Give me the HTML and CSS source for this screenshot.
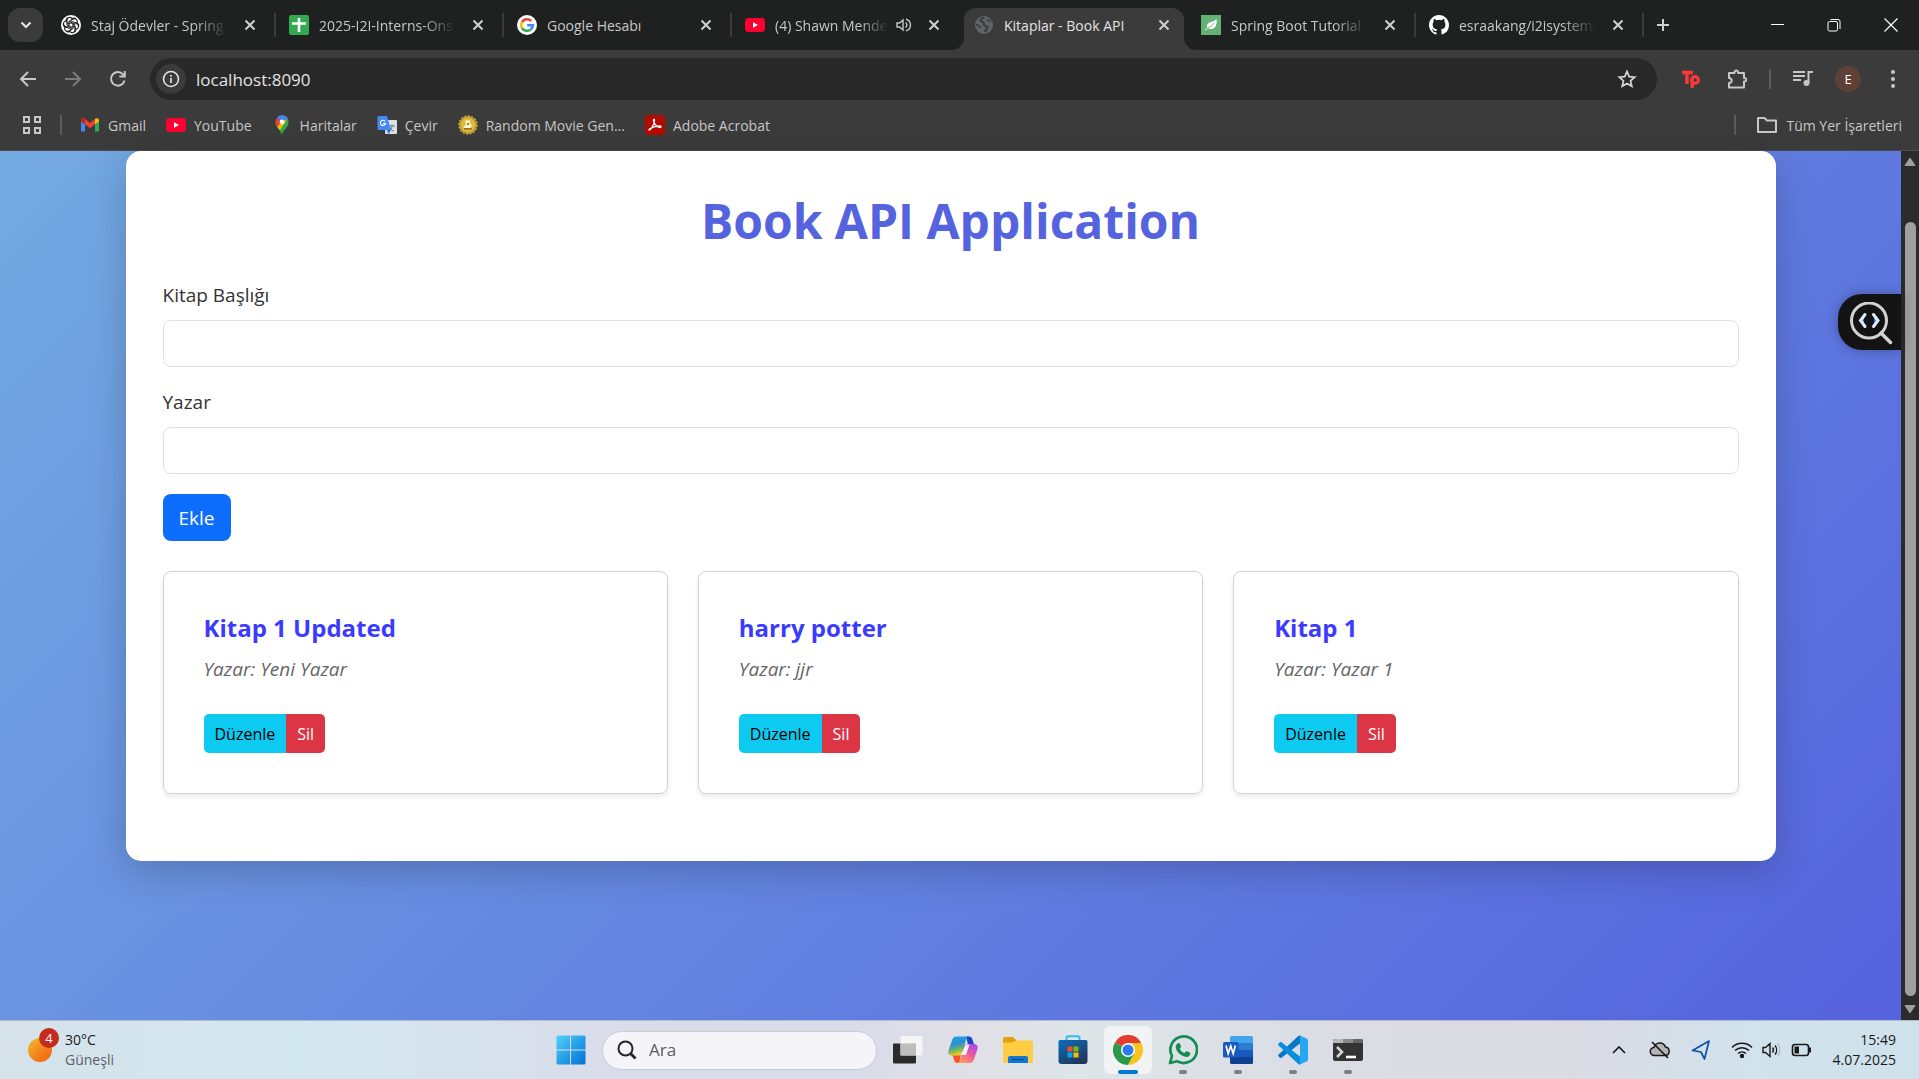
FILE: index.html
```html
<!DOCTYPE html>
<html lang="tr">
<head>
<meta charset="utf-8">
<meta name="viewport" content="width=device-width, initial-scale=1">
<title>Kitaplar - Book API</title>
<link rel="stylesheet" href="styles.css">
</head>
<body>
<svg class="defs" aria-hidden="true">
  <symbol id="i-x" viewBox="0 0 20 20"><path d="M5.500 5.500l9 9M14.500 5.500l-9 9" stroke="currentColor" stroke-width="2" fill="none"/></symbol>
  <symbol id="i-yt" viewBox="0 0 20 20"><rect y="3" width="20" height="14" rx="3.500" fill="#ff0033"/><path d="M8 7.200v5.600l5-2.800z" fill="#fff"/></symbol>
</svg>

<header class="browser">
  <nav class="tabstrip" aria-label="Sekmeler">
    <button class="tab-search" aria-label="Sekmelerde ara"><svg width="14" height="14" viewBox="0 0 14 14"><path d="M2.500 4.500L7 9l4.500-4.500" stroke="#e3e3e3" stroke-width="2.200" fill="none"/></svg></button>
    <div class="tabs">
      <div class="tab">
        <svg class="icon" viewBox="0 0 20 20"><circle cx="10" cy="10" r="10" fill="#fff"/><g fill="none" stroke="#222" stroke-width="1.100"><path id="petal" d="M10 7.700V5.900a2.900 2.900 0 0 1 5.100-1.800M8 11.200V6.600l4.200-2.500a2.900 2.900 0 0 1 3.900 3.900"/><use href="#petal" transform="rotate(60 10 10)"/><use href="#petal" transform="rotate(120 10 10)"/><use href="#petal" transform="rotate(180 10 10)"/><use href="#petal" transform="rotate(240 10 10)"/><use href="#petal" transform="rotate(300 10 10)"/></g></svg>
        <button class="tab-title fade">Staj Ödevler - Spring</button>
        <button class="close" aria-label="Kapat"><svg class="icon"><use href="#i-x"/></svg></button>
      </div>
      <div class="tab">
        <svg class="icon" viewBox="0 0 20 20"><rect width="20" height="20" rx="2" fill="#34a853"/><path d="M10 3v14M3 8.500h14" stroke="#fff" stroke-width="2.600"/></svg>
        <button class="tab-title fade">2025-I2I-Interns-Ons</button>
        <button class="close" aria-label="Kapat"><svg class="icon"><use href="#i-x"/></svg></button>
      </div>
      <div class="tab">
        <svg class="icon" viewBox="0 0 20 20"><circle cx="10" cy="10" r="10" fill="#fff"/><g fill="none" stroke-width="2.600"><path d="M14.200 6A5.800 5.800 0 0 0 5 7.200" stroke="#ea4335"/><path d="M5 7.200a5.800 5.800 0 0 0 0 5.600" stroke="#fbbc05"/><path d="M5 12.800a5.800 5.800 0 0 0 8.700 1.700" stroke="#34a853"/><path d="M13.700 14.500A5.800 5.800 0 0 0 15.800 10.200H10.200" stroke="#4285f4"/></g></svg>
        <button class="tab-title">Google Hesabı</button>
        <button class="close" aria-label="Kapat"><svg class="icon"><use href="#i-x"/></svg></button>
      </div>
      <div class="tab plain">
        <svg class="icon"><use href="#i-yt"/></svg>
        <button class="tab-title tight fade">(4) Shawn Mende</button>
        <button class="mute" aria-label="Sekmenin sesini kapat"><svg width="16" height="16" viewBox="0 0 16 16" fill="none" stroke="#c7c7c7" stroke-width="1.400"><path d="M1 6v4h2.500l3.500 3V3L3.500 6zM9.500 5.500a3 3 0 0 1 0 5M10 2.200a6 6 0 0 1 0 11.600"/></svg></button>
        <button class="close" aria-label="Kapat"><svg class="icon"><use href="#i-x"/></svg></button>
      </div>
      <div class="tab active">
        <svg class="icon" viewBox="0 0 20 20"><circle cx="10" cy="10" r="9" fill="#5f6368"/><path d="M10 2.500c-1.500 1-3.500 1.200-3.500 3 0 1.500 1.800 1 3 2s-.5 2.200 1 3 3 .3 3 2-2 2-2.500 4.500" fill="none" stroke="#3b3b3b" stroke-width="2.200"/><path d="M2 9.500c2 .5 4 1.500 4.500 3.500M13 4.500c1 1.500 3 1.500 4 2" fill="none" stroke="#3b3b3b" stroke-width="1.500"/></svg>
        <button class="tab-title">Kitaplar - Book API</button>
        <button class="close" aria-label="Kapat"><svg class="icon"><use href="#i-x"/></svg></button>
      </div>
      <div class="tab">
        <svg class="icon" viewBox="0 0 20 20"><rect width="20" height="20" fill="#63b175"/><path d="M15.500 4c.8 5.500-1 10-5.500 10-1.500 0-2.500-.4-3.200-1L5 15.500l-.8-.6 2-2.500C4.500 6.500 12 8 15.500 4z" fill="#fff"/><path d="M6 13.200c3-.8 5.500-2.400 7-5.200" stroke="#63b175" stroke-width=".9" fill="none"/></svg>
        <button class="tab-title fade">Spring Boot Tutorial</button>
        <button class="close" aria-label="Kapat"><svg class="icon"><use href="#i-x"/></svg></button>
      </div>
      <div class="tab">
        <svg class="icon" viewBox="0 0 16 16"><path fill="#fff" d="M8 0C3.580 0 0 3.580 0 8c0 3.540 2.290 6.530 5.470 7.590.4.070.55-.17.55-.38 0-.19-.01-.82-.01-1.490-2.010.37-2.530-.49-2.690-.94-.09-.23-.48-.94-.82-1.130-.28-.15-.68-.52-.01-.53.63-.01 1.080.58 1.230.82.72 1.210 1.870.87 2.330.66.070-.52.28-.87.51-1.070-1.780-.2-3.640-.89-3.640-3.950 0-.87.31-1.590.82-2.150-.08-.2-.36-1.020.08-2.120 0 0 .67-.21 2.200.82a7.600 7.600 0 0 1 4 0c1.530-1.040 2.200-.82 2.200-.82.44 1.100.16 1.920.08 2.120.51.56.82 1.270.82 2.150 0 3.070-1.870 3.750-3.650 3.950.29.25.54.73.54 1.480 0 1.070-.01 1.930-.01 2.200 0 .21.15.46.55.38A8 8 0 0 0 16 8c0-4.420-3.580-8-8-8z"/></svg>
        <button class="tab-title fade">esraakang/i2isystems</button>
        <button class="close" aria-label="Kapat"><svg class="icon"><use href="#i-x"/></svg></button>
      </div>
    </div>
    <button class="new-tab" aria-label="Yeni sekme"><svg width="14" height="14" viewBox="0 0 14 14"><path d="M7 1v12M1 7h12" stroke="#d0d0d0" stroke-width="2"/></svg></button>
    <div class="window-controls">
      <button aria-label="Simge durumuna küçült"><svg width="14" height="14" viewBox="0 0 14 14"><path d="M1 6.500h13" stroke="#fff"/></svg></button>
      <button aria-label="Önceki boyut"><svg width="14" height="14" viewBox="0 0 14 14" fill="none" stroke="#fff"><rect x="1" y="3.500" width="9.500" height="9.500" rx="1.500"/><path d="M3.500 1.500H11a2 2 0 0 1 2 2V11"/></svg></button>
      <button aria-label="Pencereyi kapat"><svg width="14" height="14" viewBox="0 0 14 14"><path d="M.5.5l13 13M13.500.5l-13 13" stroke="#fff" stroke-width="1.200"/></svg></button>
    </div>
  </nav>

  <div class="toolbar">
    <div class="nav-buttons">
      <button aria-label="Geri"><svg class="icon" viewBox="0 0 20 20"><path d="M18 10H3.500M10 3l-7 7 7 7" fill="none" stroke="#c7c7c7" stroke-width="2"/></svg></button>
      <button aria-label="İleri" disabled><svg class="icon" viewBox="0 0 20 20"><path d="M2 10h14.500M10 3l7 7-7 7" fill="none" stroke="#7c7c7c" stroke-width="2"/></svg></button>
      <button aria-label="Yenile"><svg class="icon" viewBox="0 0 20 20"><path d="M16.500 11.500A6.800 6.800 0 1 1 15 5.300l1.500 1.700M16.800 2v5.500h-5.500" fill="none" stroke="#c7c7c7" stroke-width="2"/></svg></button>
    </div>
    <div class="omnibox">
      <button class="site-info" aria-label="Site bilgileri"><svg class="icon" viewBox="0 0 20 20"><circle cx="10" cy="10" r="7.500" fill="none" stroke="#e3e3e3" stroke-width="1.600"/><path d="M10 9v5M10 6v1.700" stroke="#e3e3e3" stroke-width="1.700"/></svg></button>
      <input class="address" type="text" aria-label="Adres çubuğu" value="localhost:8090">
      <button aria-label="Yer işareti ekle"><svg class="icon" viewBox="0 0 20 20"><path d="M10 2.500l2.200 5.100 5.500.5-4.200 3.700 1.300 5.500-4.800-2.900-4.800 2.900 1.300-5.500-4.200-3.700 5.500-.5z" fill="none" stroke="#d5d5d5" stroke-width="1.700"/></svg></button>
    </div>
    <div class="extensions">
      <button class="pinned" aria-label="Tp uzantısı"><svg class="icon" viewBox="0 0 20 20" fill="none" stroke="#f8383a"><path d="M1 3.500h11" stroke-width="3.600"/><path d="M6 3v12" stroke-width="3.600"/><circle cx="14" cy="11" r="3.300" stroke-width="3.200"/><path d="M11.200 9v10" stroke-width="3.200"/></svg></button>
      <button aria-label="Uzantılar"><svg class="icon" viewBox="0 0 20 20"><path d="M2 4h5.500c-.5-3.500 4-3.500 3.500 0H17v5c3.200-.2 3.200 3.700 0 3.500v6H2V14c3.500 0 3.500-5 0-5z" fill="none" stroke="#c7c7c7" stroke-width="2" stroke-linejoin="round"/></svg></button>
      <span class="divider"></span>
      <button aria-label="Medya denetimi"><svg class="icon" viewBox="0 0 20 20"><path d="M0 3h12M0 7h12M0 11h8" stroke="#c7c7c7" stroke-width="2"/><path d="M15.500 14V3H20" fill="none" stroke="#c7c7c7" stroke-width="2"/><circle cx="13.500" cy="14" r="3" fill="#c7c7c7"/></svg></button>
      <button class="avatar" aria-label="Profil">E</button>
      <button aria-label="Menü"><svg class="icon" viewBox="0 0 20 20" fill="#c7c7c7"><circle cx="10" cy="3" r="2"/><circle cx="10" cy="10" r="2"/><circle cx="10" cy="17" r="2"/></svg></button>
    </div>
  </div>

  <nav class="bookmarks" aria-label="Yer işaretleri">
    <button aria-label="Uygulamalar"><svg class="icon" viewBox="0 0 20 20" fill="none" stroke="#c7c7c7" stroke-width="2"><path d="M2 2h5v5H2zM13 2h5v5h-5zM2 13h5v5H2zM13 13h5v5h-5z"/></svg></button>
    <span class="divider first"></span>
    <a href="#"><svg class="icon" viewBox="0 0 20 20"><path d="M1 5v11.500h4V9z" fill="#4285f4"/><path d="M19 5v11.500h-4V9z" fill="#34a853"/><path d="M1 5.500C1 3 3.500 2.800 5 4l5 4 5-4v5.200l-5 4-5-4z" fill="#ea4335"/><path d="M1 5.500C1 3 3.500 2.800 5 4v5.200L1 6.500z" fill="#c5221f"/><path d="M19 5.500C19 3 16.500 2.800 15 4v5.200l4-2.700z" fill="#fbbc04"/></svg>Gmail</a>
    <a href="#"><svg class="icon"><use href="#i-yt"/></svg>YouTube</a>
    <a href="#"><svg class="icon" viewBox="0 0 20 20"><path d="M10 20c0-4-6.500-7-6.500-12.500h13C16.500 13 10.800 15 10 20z" fill="#34a853"/><path d="M3.500 7a6.500 6.500 0 0 0 1.800 4.700L10 7 5 2.700A6.500 6.500 0 0 0 3.500 7z" fill="#ea4335"/><path d="M5 2.700a6.500 6.500 0 0 1 11 1L10 7z" fill="#4285f4"/><path d="M5.300 11.700c.8 1.300 1.700 2.300 2.500 3.500L16 3.700 10 7z" fill="#fbbc04"/><path d="M16 3.700c1.500 4-.5 7-3 9.500L8 19l2-5z" fill="#34a853"/><circle cx="10" cy="6.800" r="2.400" fill="#fff"/></svg>Haritalar</a>
    <a href="#"><svg class="icon" viewBox="0 0 20 20"><rect x="8" y="5" width="12" height="14" rx="1" fill="#dce1e6"/><path d="M12 11h6M15 9.500V11c0 2-1.500 4-3 5M13 12.500c1 2 2.500 3 4 3.500" stroke="#5f7d8c" fill="none"/><path d="M1.500 1H10l4 14H1.500A1 1 0 0 1 .5 14V2a1 1 0 0 1 1-1z" fill="#4688f4"/><path d="M10 15h4l-2.500 4z" fill="#3367d6"/><path d="M8.200 6.500A2.600 2.600 0 1 0 8.500 8.500H6" stroke="#fff" stroke-width="1.200" fill="none"/></svg>Çevir</a>
    <a href="#"><svg class="icon" viewBox="0 0 20 20"><circle cx="10" cy="10" r="9" fill="#b8902a" stroke="#c9a94a" stroke-width="1.500" stroke-dasharray="2 1.500"/><circle cx="10" cy="10" r="7.500" fill="#e0b93a"/><path d="M7.500 5.500H12v2.700l2 2.300-2 2.500H7L5 12l2.500-1.500z" fill="#fffbe0"/><path d="M6 13.200h8v1.300H6z" fill="#8a6512"/><circle cx="10" cy="9" r="1.300" fill="#b28416"/></svg>Random Movie Gen...</a>
    <a href="#"><svg class="icon" viewBox="0 0 20 20"><rect width="20" height="20" rx="3" fill="#b30b00"/><path d="M4 15c1.500.5 5-5 5.500-9.500C9.500 3.500 8 4 8.500 6c.7 3 4 6.500 6.500 6.500 1.500 0 1.500-1.500-.5-1.500-3 0-6.500 1-9.300 2.500C4 14.200 4 14.700 4 15z" fill="none" stroke="#fff" stroke-width="1.300"/></svg>Adobe Acrobat</a>
    <span class="divider push"></span>
    <a href="#"><svg class="folder" viewBox="0 0 22 18"><path d="M2 2h6.500l2.500 2.500h9V16H2z" fill="none" stroke="#c7c7c7" stroke-width="2" stroke-linejoin="round"/></svg>Tüm Yer İşaretleri</a>
  </nav>
</header>

<div class="viewport">
  <main class="page">
    <section class="panel">
      <h1>Book API Application</h1>
      <form class="book-form">
        <label for="title">Kitap Başlığı</label>
        <input id="title" type="text">
        <label for="author">Yazar</label>
        <input id="author" type="text">
        <button class="add" type="button">Ekle</button>
      </form>
      <div class="books">
        <article class="book">
          <h2>Kitap 1 Updated</h2>
          <p>Yazar: Yeni Yazar</p>
          <div class="actions"><button class="edit">Düzenle</button><button class="delete">Sil</button></div>
        </article>
        <article class="book">
          <h2>harry potter</h2>
          <p>Yazar: jjr</p>
          <div class="actions"><button class="edit">Düzenle</button><button class="delete">Sil</button></div>
        </article>
        <article class="book">
          <h2>Kitap 1</h2>
          <p>Yazar: Yazar 1</p>
          <div class="actions"><button class="edit">Düzenle</button><button class="delete">Sil</button></div>
        </article>
      </div>
    </section>
    <button class="inspector" aria-label="Kodu incele"><svg width="44" height="44" viewBox="0 0 44 44" fill="none"><circle cx="19" cy="18.500" r="17.500" stroke="#d2d2d2" stroke-width="3"/><path d="M31 31l9.500 9.500" stroke="#d2d2d2" stroke-width="3.500" stroke-linecap="round"/><path d="M14 14v10l-3.500-5zM24 14v10l3.500-5z" fill="#1677ff"/><path d="M15 12.500l-4.500 6 4.500 6M23.500 12.500l4.500 6-4.500 6" stroke="#e4e8f0" stroke-width="3" stroke-linecap="round"/></svg></button>
  </main>
  <div class="scrollbar" aria-hidden="true">
    <svg width="12" height="10" viewBox="0 0 12 10"><path d="M6 1l5 7.500H1z" fill="#9f9f9f" stroke="#9f9f9f" stroke-linejoin="round"/></svg>
    <div class="track"><div class="thumb"></div></div>
    <svg width="12" height="10" viewBox="0 0 12 10"><path d="M6 9l5-7.500H1z" fill="#9f9f9f" stroke="#9f9f9f" stroke-linejoin="round"/></svg>
  </div>
</div>

<footer class="taskbar">
  <button class="weather">
    <span class="sun"><span class="badge">4</span></span>
    <span class="forecast"><span>30°C</span><span class="sky">Güneşli</span></span>
  </button>
  <div class="apps">
    <button class="app" aria-label="Başlat"><svg viewBox="0 0 30 30"><defs><linearGradient id="win" x2="1" y2="1"><stop stop-color="#4fd2fb"/><stop offset="1" stop-color="#0070d2"/></linearGradient></defs><path fill="url(#win)" d="M1.500.5H14v14H.5v-13zM15 .5h13.500l1 1v13H15zM.5 15.500H14v14H1.500l-1-1zM15 15.500h14.500v13l-1 1H15z"/></svg></button>
    <label class="search"><svg width="20" height="20" viewBox="0 0 20 20" fill="none" stroke="#262626"><circle cx="8.500" cy="8.500" r="7" stroke-width="2"/><path d="M13.500 13.500l5 5" stroke-width="2.800"/></svg><input type="text" aria-label="Ara" placeholder="Ara"></label>
    <button class="app" aria-label="Görev görünümü"><svg viewBox="0 0 30 30"><rect y="8.500" width="23" height="20" rx="1" fill="#2b2b2b"/><rect x="7.500" y="1" width="22" height="19.500" rx="1" fill="#f5f5f5" fill-opacity=".95"/><path d="M7.500 8.500H23v12H7.500z" fill="#bdbdbd"/></svg></button>
    <button class="app" aria-label="Copilot"><svg viewBox="0 0 30 30"><defs><linearGradient id="cpa" x2=".3" y2="1"><stop stop-color="#1aa7ee"/><stop offset=".45" stop-color="#2c8fd6"/><stop offset=".75" stop-color="#69b865"/><stop offset="1" stop-color="#f2cf1c"/></linearGradient><linearGradient id="cpb" x1=".8" x2=".2" y2="1"><stop stop-color="#a64bf0"/><stop offset=".5" stop-color="#ef5a9c"/><stop offset="1" stop-color="#ffa35a"/></linearGradient></defs><path d="M18 1.500h3c2 0 3 1 3.500 3l1.500 5h-6z" fill="#1748c4"/><path d="M12 28H9.500c-2 0-3-1-3.500-3l-1.500-5h8z" fill="#f2562e"/><path d="M8.500 1.500H21c-1.500 0-2.500 1-3 3l-3.500 13c-.6 2-1.800 3-3.500 3H4c-3 0-4.300-2-3.500-5L4 5.500c.8-2.500 2-4 4.500-4z" fill="url(#cpa)"/><path d="M21.500 28H9c1.500 0 2.500-1 3-3l3.500-13c.6-2 1.800-3 3.500-3h7c3 0 4.300 2 3.500 5L26 24c-.8 2.500-2 4-4.500 4z" fill="url(#cpb)"/><path d="M17.500 9.500h4L18 20h-5z" fill="#eef2f8"/></svg></button>
    <button class="app" aria-label="Dosya Gezgini"><svg viewBox="0 0 30 30"><path d="M0 4a2 2 0 0 1 2-2h8l3 3v6H0z" fill="#e0a00f"/><path d="M0 7.500h10l3-2h15a2 2 0 0 1 2 2v19a1.500 1.500 0 0 1-1.500 1.500h-27A1.500 1.500 0 0 1 0 26.500z" fill="#ffcd43"/><path d="M5 28v-5a2 2 0 0 1 2-2h16a2 2 0 0 1 2 2v5z" fill="#1177cf"/><path d="M9 24.500h12" stroke="#07508f" stroke-width="1.500"/></svg></button>
    <button class="app" aria-label="Microsoft Store"><svg viewBox="0 0 30 30"><defs><linearGradient id="st" x2=".6" y2="1"><stop stop-color="#0b6ebd"/><stop offset="1" stop-color="#22375e"/></linearGradient></defs><path d="M8.500 6V3A1.800 1.800 0 0 1 10.300 1.200h9.400A1.800 1.800 0 0 1 21.500 3v3" fill="none" stroke="#35bdf2" stroke-width="2"/><path d="M.5 6.500A1.500 1.500 0 0 1 2 5h26a1.500 1.500 0 0 1 1.500 1.500V26a3 3 0 0 1-3 3h-23a3 3 0 0 1-3-3z" fill="url(#st)"/><path d="M9.500 11.500h5v5h-5z" fill="#f25022"/><path d="M15.500 11.500h5v5h-5z" fill="#7fba00"/><path d="M9.500 17.500h5v5h-5z" fill="#00a4ef"/><path d="M15.500 17.500h5v5h-5z" fill="#ffb900"/></svg></button>
    <button class="app current" aria-label="Google Chrome"><svg viewBox="0 0 30 30"><path d="M15 15L2 7.500A15 15 0 0 1 28 7.500z" fill="#e33b2e"/><path d="M15 15L2 7.500A15 15 0 0 0 15 30l6.500-11.250z" fill="#2a9a48"/><path d="M15 8h13.300L15 15z" fill="#e33b2e"/><path d="M28.300 8H15l6.300 10.500L15 30A15 15 0 0 0 28.300 8z" fill="#fcc31e"/><circle cx="15" cy="15" r="7" fill="#fff"/><circle cx="15" cy="15" r="5.500" fill="#2b7bee"/></svg></button>
    <button class="app open" aria-label="WhatsApp"><svg viewBox="0 0 30 30"><path d="M2 28l2-7A13.300 13.300 0 1 1 9 26.200z" fill="none" stroke="#168c55" stroke-width="2.700" stroke-linejoin="round"/><path d="M10.500 8c.7-.2 1.200 0 1.500.7l1 2.500c.2.600 0 1-.4 1.500l-.8 1c1.200 2.200 2.700 3.500 4.700 4.400l1.300-1.500c.4-.5.8-.5 1.400-.3l2.500 1.200c.6.300.8.700.7 1.300-.3 2-2 3.300-4 3.200C13 21.500 8 16.500 7.700 12c0-2 1.300-3.600 2.800-4z" fill="#168c55"/></svg></button>
    <button class="app open" aria-label="Word"><svg viewBox="0 0 30 30"><path d="M7 2.500A1.500 1.500 0 0 1 8.500 1h20A1.500 1.500 0 0 1 30 2.500V8H7z" fill="#41a5ee"/><path d="M7 8h23v7H7z" fill="#2b7cd3"/><path d="M7 15h23v7H7z" fill="#185abd"/><path d="M7 22h23v5.500a1.500 1.500 0 0 1-1.500 1.500h-20A1.500 1.500 0 0 1 7 27.500z" fill="#103f91"/><rect y="7" width="15.500" height="15.500" rx="1.500" fill="#185abd"/><path d="M3 10.500l2.200 8L7.700 11l2.500 7.500 2.200-8" fill="none" stroke="#fff" stroke-width="1.700"/></svg></button>
    <button class="app open" aria-label="Visual Studio Code"><svg viewBox="0 0 30 30"><path d="M22 .5l6.500 3A2 2 0 0 1 30 5.300v19.400a2 2 0 0 1-1.500 1.800l-6.500 3z" fill="#25a7f2"/><path d="M22 .5v8L3.500 22.700a1.300 1.300 0 0 1-1.600 0L.6 21.500a1.300 1.300 0 0 1 0-1.900L20 1.300C20.700.6 21.300.3 22 .5z" fill="#0878c4"/><path d="M22 29.500v-8L3.500 7.300a1.300 1.300 0 0 0-1.600 0L.6 8.500a1.300 1.300 0 0 0 0 1.900L20 28.700c.7.700 1.300 1 2 .8z" fill="#0a8ddb"/></svg></button>
    <button class="app open" aria-label="Terminal"><svg viewBox="0 0 30 30"><path d="M0 6a2 2 0 0 1 2-2h26a2 2 0 0 1 2 2v18a2 2 0 0 1-2 2H2a2 2 0 0 1-2-2z" fill="#333"/><path d="M0 8V6a2 2 0 0 1 2-2h8v4z" fill="#b8b8b8"/><path d="M10 4h10v4H10z" fill="#8a8a8a"/><path d="M20 4h8a2 2 0 0 1 2 2v2H20z" fill="#666"/><path d="M4 12l5 5-5 5" fill="none" stroke="#d4d4d4" stroke-width="2.600"/><path d="M13 22h10" stroke="#fff" stroke-width="2.600"/></svg></button>
  </div>
  <div class="tray">
    <button aria-label="Gizli simgeler"><svg width="20" height="8" viewBox="0 0 20 8"><path d="M4 7l6-6 6 6" fill="none" stroke="#1a1a1a" stroke-width="1.700"/></svg></button>
    <button aria-label="OneDrive"><svg width="22" height="18" viewBox="0 0 22 18"><path d="M5.500 14.500a4 4 0 0 1-.5-8 6 6 0 0 1 11.500-.5 4.300 4.300 0 0 1 0 8.500z" fill="#b5b5b5" stroke="#1a1a1a" stroke-width="1.500"/><path d="M3 1l16 16" stroke="#1a1a1a" stroke-width="1.700"/></svg></button>
    <button aria-label="Konum"><svg width="20" height="20" viewBox="0 0 20 20"><path d="M18 1L1.500 10.500l8.500 1.500 3.500 7z" fill="none" stroke="#0f4fa8" stroke-width="1.700" stroke-linejoin="round"/></svg></button>
    <button class="system" aria-label="Ağ, ses ve pil">
      <svg width="22" height="18" viewBox="0 0 22 18" fill="none" stroke="#1a1a1a" stroke-width="1.500"><path d="M1 6.500a14 14 0 0 1 20 0M4 9.500a10 10 0 0 1 14 0M7 12.500a6 6 0 0 1 8 0"/><circle cx="11" cy="15" r="1.500" fill="#1a1a1a"/></svg>
      <svg width="20" height="18" viewBox="0 0 20 18" fill="none" stroke="#1a1a1a" stroke-width="1.400"><path d="M1 6.500v5h2.500L8 15.500v-13L3.500 6.500zM10.500 6.500a4 4 0 0 1 0 5M13 4.500a7 7 0 0 1 0 9"/><path d="M15.500 2.500a10 10 0 0 1 0 13" stroke="#b5bcc2"/></svg>
      <svg width="22" height="14" viewBox="0 0 22 14"><rect x="1.500" y="1.500" width="16" height="11" rx="2.500" fill="none" stroke="#1a1a1a" stroke-width="1.600"/><path d="M3.500 3.500H8v7H3.500zM18 4.500h2v5h-2z" fill="#1a1a1a"/></svg>
    </button>
    <button class="clock"><span>15:49</span><span>4.07.2025</span></button>
  </div>
</footer>
</body>
</html>
```
FILE: styles.css
```css
* { box-sizing: border-box; }

body {
  margin: 0;
  min-height: 100vh;
  display: flex;
  flex-direction: column;
  font-family: "Open Sans", "Noto Sans", sans-serif;
  color: #333;
}

button, input {
  font: inherit;
  color: inherit;
  margin: 0;
  padding: 0;
  border: 0;
  background: none;
}

button {
  display: flex;
  align-items: center;
  justify-content: center;
}

a { color: inherit; text-decoration: none; }

.defs { position: absolute; width: 0; height: 0; }
.icon { width: 20px; height: 20px; flex: none; display: block; }
.divider { width: 2px; height: 20px; background: #5b5b5b; flex: none; }

/* Browser frame */
.browser { background: #3b3b3b; color: #c7c7c7; font-size: 14px; border-bottom: 1px solid #4a4a4a; }

.tabstrip {
  display: flex;
  align-items: center;
  height: 50px;
  background: #1f2120;
  padding-left: 8px;
}
.tab-search { width: 35px; height: 34px; border-radius: 12px; background: #3b3b3b; flex: none; }
.tabs {
  display: grid;
  grid-template-columns: repeat(7, minmax(0, 1fr));
  align-self: stretch;
  flex: 0 1 1596px;
  min-width: 0;
  margin-left: 5px;
  padding-top: 8px;
}
.tab {
  min-width: 0;
  display: flex;
  align-items: center;
  padding: 0 0 8px 13px;
}
.tab::after { content: ""; width: 2px; height: 24px; background: #3b3b3b; margin-left: 14px; flex: none; }
.tab.plain::after, .tab.active::after { background: none; }
.tab-title {
  flex: 1;
  min-width: 0;
  justify-content: flex-start;
  white-space: nowrap;
  margin: 0 12px 0 10px;
}
.fade {
  -webkit-mask-image: linear-gradient(90deg, #000 75%, transparent);
  mask-image: linear-gradient(90deg, #000 75%, transparent);
}
.tab-title.tight { margin-right: 8px; }
.mute { margin-right: 12px; }
.close { color: #d0d0d0; }
.tab.active {
  position: relative;
  margin: 0 4px;
  padding-left: 10px;
  background: #3b3b3b;
  border-radius: 12px 12px 0 0;
  color: #e3e3e3;
}
.tab.active::after { margin-left: 8px; }
.tab.active::before {
  content: "";
  position: absolute;
  left: -12px;
  right: -12px;
  bottom: 0;
  height: 12px;
  background:
    radial-gradient(circle at 0 0, transparent 12px, #3b3b3b 12px) 0 0 / 12px 12px no-repeat,
    radial-gradient(circle at 100% 0, transparent 12px, #3b3b3b 12px) 100% 0 / 12px 12px no-repeat;
}
.new-tab { width: 34px; height: 34px; flex: none; margin-left: 2px; }
.window-controls { display: flex; margin-left: auto; }
.window-controls button { width: 57px; height: 48px; }

.toolbar { display: flex; align-items: center; padding: 8px 16px 0 10px; }
.nav-buttons { display: flex; gap: 9px; margin-right: 14px; }
.nav-buttons button { width: 36px; height: 36px; }
.omnibox {
  flex: 1;
  display: flex;
  align-items: center;
  height: 42px;
  padding: 0 20px 0 6px;
  border-radius: 21px;
  background: #282828;
}
.site-info { width: 30px; height: 30px; border-radius: 15px; background: #3b3b3b; }
.address { flex: 1; margin-left: 10px; font-size: 17px; color: #e3e3e3; outline: 0; }
.extensions { display: flex; align-items: center; gap: 22px; margin-left: 24px; }
.pinned { margin-right: 4px; }
.avatar { width: 26px; height: 26px; border-radius: 13px; background: #5e4037; color: #fff; font-size: 13px; }

.bookmarks { display: flex; align-items: center; gap: 20px; height: 50px; padding: 0 17px 0 22px; }
.bookmarks a { display: flex; align-items: center; gap: 8px; white-space: nowrap; }
.divider.first { margin: 0 -2px; }
.push { margin-left: auto; }
.folder { width: 22px; height: 18px; }

/* Page area */
.viewport { flex: 1; display: flex; }
.page {
  position: relative;
  flex: 1;
  padding: 0 125px 159px;
  background: linear-gradient(135deg, #74abe2, #5563de) 0 100% / 100% 106%;
}
.panel {
  max-width: 1650px;
  margin: 0 auto;
  padding: 37px;
  padding-bottom: 67px;
  border-radius: 15px;
  background: #fff;
  box-shadow: 0 10px 38px rgba(0, 0, 0, .2);
  font-size: 19px;
}
h1 {
  margin: 0 0 27px;
  font-size: 48px;
  line-height: 65px;
  text-align: center;
  color: #5563de;
}
.book-form { display: flex; flex-direction: column; align-items: flex-start; margin-bottom: 30px; }
.book-form label { line-height: 30px; margin-bottom: 10px; }
.book-form input {
  width: 100%;
  height: 47px;
  padding: 0 15px;
  margin-bottom: 20px;
  border: 1px solid #dee2e6;
  border-radius: 8px;
}
.add { height: 47px; padding: 0 16px; border-radius: 8px; background: #0d6efd; color: #fff; }

.books { display: grid; grid-template-columns: repeat(3, 1fr); gap: 30px; }
.book {
  padding: 40px;
  border: 1px solid #d3d3d3;
  border-radius: 8px;
  box-shadow: 0 3px 5px rgba(0, 0, 0, .08);
}
.book h2 { margin: 0 0 10px; font-size: 24px; line-height: 32px; color: #3b3bff; }
.book p { margin: 0 0 30px; line-height: 30px; font-style: italic; color: #666; }
.actions { display: flex; width: max-content; border-radius: 5px; overflow: hidden; font-size: 16px; }
.actions button { height: 39px; padding: 0 11px; }
.edit { background: #0dcaf0; color: #000; }
.delete { background: #dc3545; color: #fff; }

.inspector {
  position: absolute;
  top: 143px;
  right: 0;
  width: 63px;
  height: 56px;
  padding: 4px 0 0 4px;
  border-radius: 24px 0 0 24px;
  background: #131313;
  box-shadow: 0 0 12px rgba(0, 0, 0, .3);
}

.scrollbar {
  width: 18px;
  display: flex;
  flex-direction: column;
  align-items: center;
  padding: 6px 0;
  background: #2b2b2b;
}
.track { flex: 1; width: 11px; display: flex; flex-direction: column; justify-content: flex-end; padding: 6px 0 8px; }
.thumb { height: 94%; border-radius: 6px; background: #9f9f9f; }

/* Taskbar */
.taskbar {
  display: grid;
  grid-template-columns: 1fr auto 1fr;
  align-items: center;
  height: 59px;
  border-top: 1px solid #b3b9cf;
  background: linear-gradient(90deg, #d5e2ea, #d3e7f0 16%, #d8dde9 31%, #d9dde9 45%, #e0dfe6 50%, #dde5e8 56%, #dbdce4 70%, #dadae2 82%, #d0e3ed 92%, #cfe2ec);
  color: #1a1a1a;
  font-size: 14px;
  line-height: 20px;
}
.weather { justify-self: start; gap: 13px; margin-left: 28px; text-align: left; }
.sun {
  position: relative;
  width: 24px;
  height: 24px;
  border-radius: 12px;
  background: linear-gradient(135deg, #efc02f, #f4811a 55%, #f0620c);
}
.badge {
  position: absolute;
  left: 11px;
  top: -10px;
  width: 20px;
  height: 20px;
  border-radius: 10px;
  background: #c42b1c;
  color: #fff;
  font-size: 13px;
  text-align: center;
}
.forecast, .clock { display: flex; flex-direction: column; }
.sky { color: #5a6166; }
.apps { display: flex; align-items: center; gap: 7px; }
.app {
  width: 48px;
  height: 48px;
  border-radius: 6px;
  position: relative;
}
.app svg { width: 30px; height: 30px; }
.app.current { background: #f1f3f5; }
.app.open::after, .app.current::after {
  content: "";
  position: absolute;
  bottom: 0;
  left: 20px;
  width: 8px;
  height: 4px;
  border-radius: 2px;
  background: #7e7e84;
}
.app.current::after { left: 14px; width: 20px; background: #0078d4; }
.search {
  width: 275px;
  height: 39px;
  display: flex;
  align-items: center;
  gap: 12px;
  padding: 0 14px;
  border: 1px solid #c9cbd9;
  border-radius: 20px;
  background: #f4f4f9;
}
.search input { flex: 1; min-width: 0; font-size: 17px; outline: 0; }
.search input::placeholder { color: #5d5d5d; opacity: 1; }
.tray { justify-self: end; display: flex; align-items: center; gap: 20px; margin-right: 23px; }
.system { gap: 9px; }
.clock { align-items: flex-end; }
```
